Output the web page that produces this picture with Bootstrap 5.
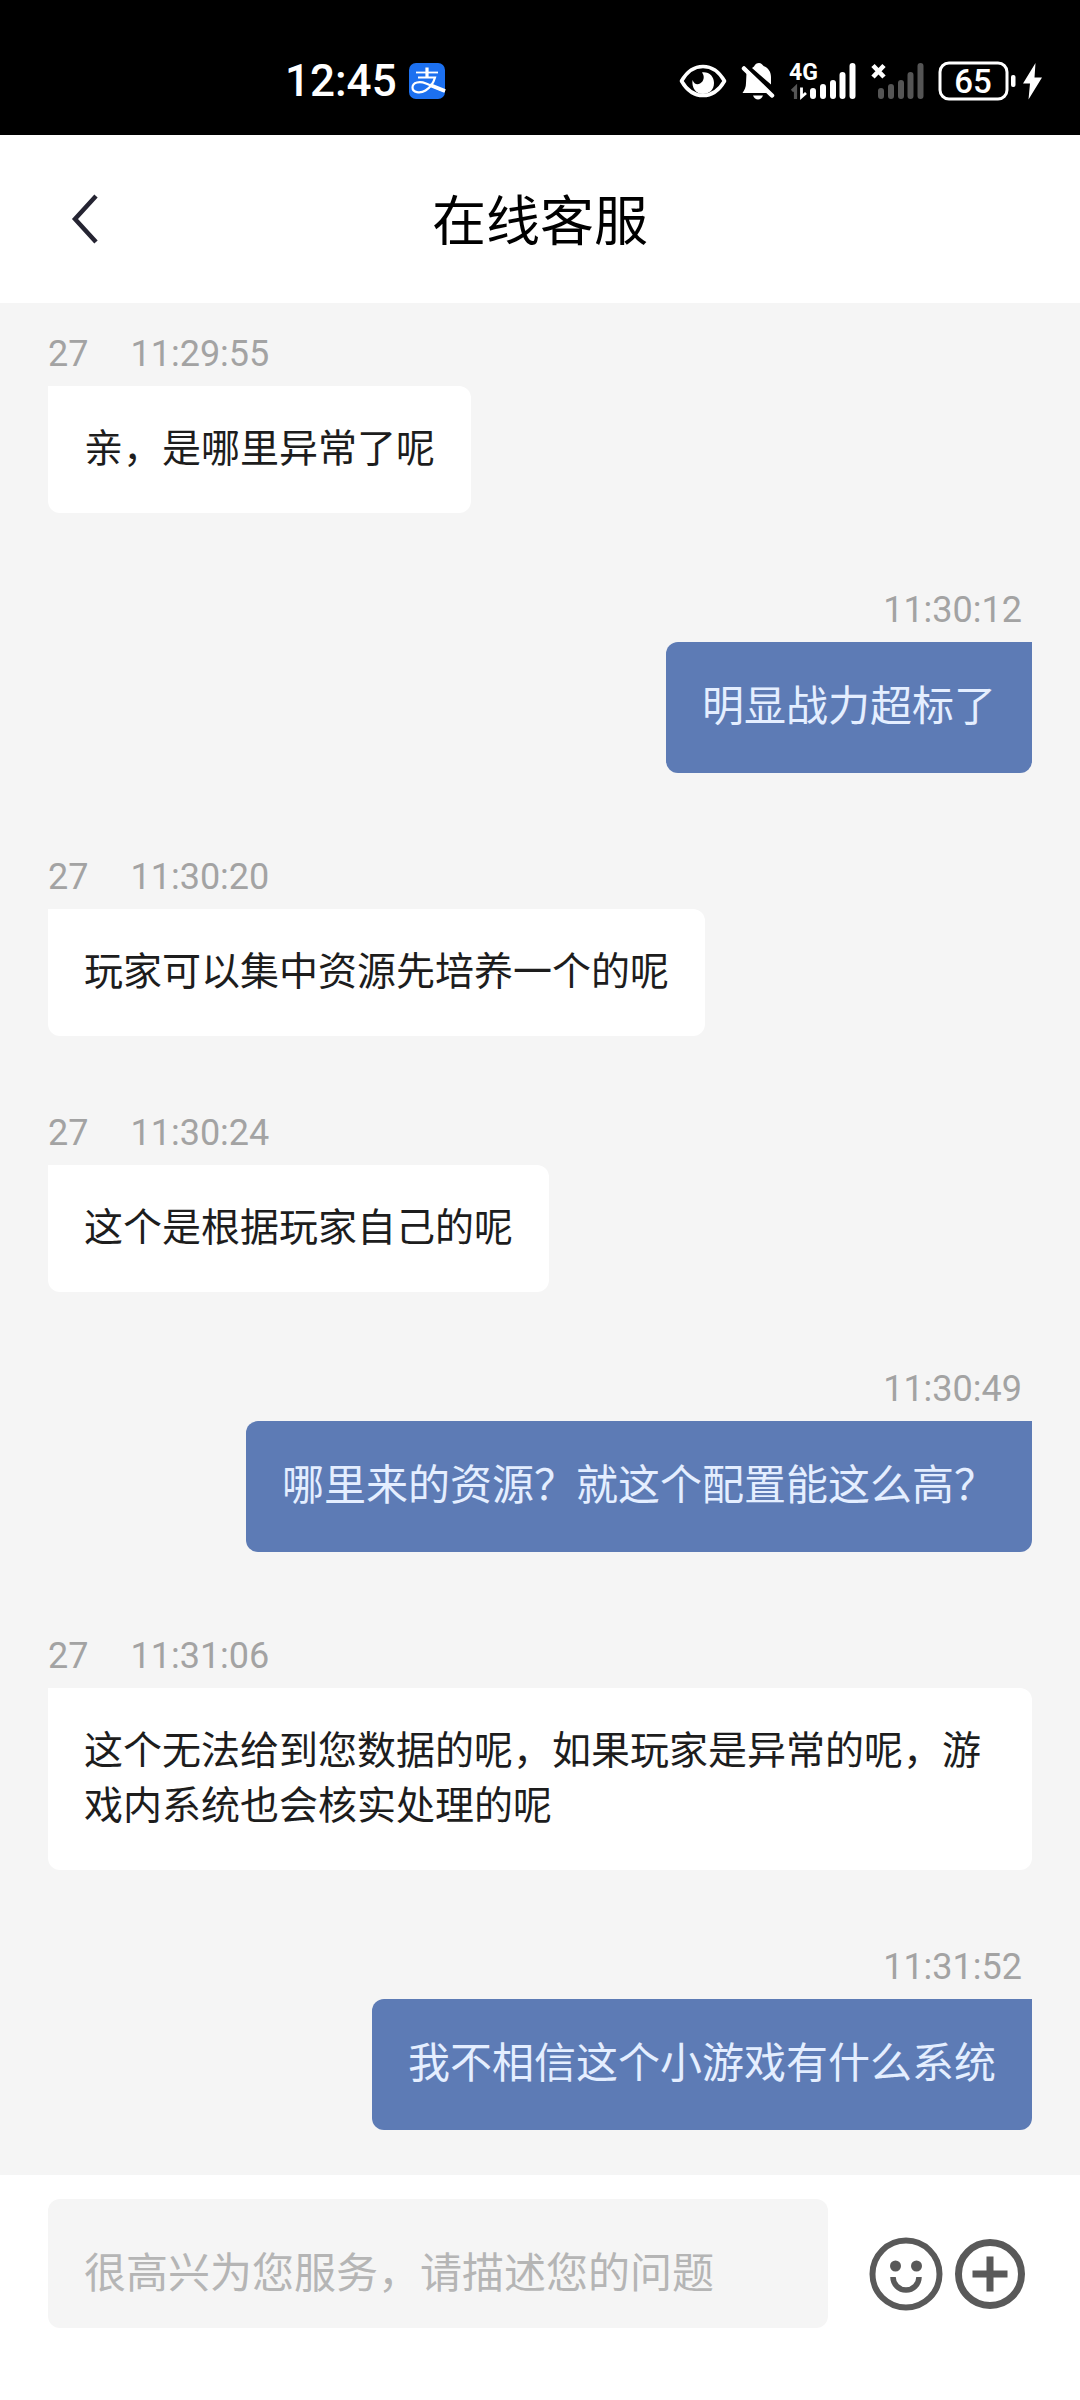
<!DOCTYPE html>
<html lang="zh-CN">
<head>
<meta charset="utf-8">
<meta name="viewport" content="width=device-width, initial-scale=1">
<title>在线客服</title>
<link rel="stylesheet" href="https://cdn.jsdelivr.net/npm/bootstrap@5.3.0/dist/css/bootstrap.min.css">
<style>
  body { font-family: Roboto, "Noto Sans CJK SC", sans-serif; background: #fff; }
  .status-bar { background: #000; color: #fff; height: 135px; padding: 26px 38px 0 285px; }
  .status-clock { font-size: 44px; line-height: 54px; font-weight: 500; }
  .status-left { gap: 12px; }
  .status-icons { gap: 14px; }
  .battery-group { gap: 7px; }
  .status-bar svg, .composer svg, .back-btn svg { display: block; overflow: visible; }
  .status-bar text { font-family: Roboto, sans-serif; fill: #fff; }

  .title-bar { height: 168px; padding: 8px 48px 0; display: grid; grid-template-columns: 72px 1fr 72px; align-items: center; }
  .title-bar h1 { font-size: 54px; line-height: 78px; font-weight: 400; color: #000; }
  .back-btn { padding: 0 0 8px 24px; line-height: 1; }

  .chat { background: #f5f5f5; padding: 30px 48px 42px; }
  .msg { margin-bottom: 76px; }
  .msg-me { margin-bottom: 83px; }
  .msg:last-child { margin-bottom: 0; }
  .msg-meta { font-size: 36px; line-height: 42px; color: #a3a3a3; margin-bottom: 11px; gap: 42px; }
  .msg-me .msg-meta { padding-right: 10px; }
  .bubble { background: #fff; color: #1d1d1d; font-size: 39px; line-height: 55px; padding: 36px 36px 36px; border-radius: 0 12px 12px 12px; }
  .msg-me .bubble { background: #5d7bb5; color: #e4eeff; font-size: 42px; line-height: 60px; padding: 35px 36px 36px; border-radius: 12px 0 12px 12px; }

  .composer { padding: 24px 55px 72px 48px; gap: 41px; }
  .composer .form-control { background: #f5f5f5; border: 0; border-radius: 12px; font-size: 42px; line-height: 64px; height: 129px; padding: 42px 36px 23px; color: #1d1d1d; }
  .composer .form-control::placeholder { color: #b5b5b5; opacity: 1; }
  .composer-actions { gap: 12px; padding-top: 20px; }
</style>
</head>
<body>
<div class="d-flex flex-column min-vh-100">

  <div class="status-bar d-flex align-items-center justify-content-between">
    <div class="status-left d-flex align-items-center">
      <span class="status-clock">12:45</span>
      <svg width="36" height="36" viewBox="0 0 36 36" role="img" aria-label="支付宝">
        <rect width="36" height="36" rx="7" fill="#1c70f0"/>
        <g fill="none" stroke="#fff">
          <path d="M7 9.500H29" stroke-width="1.800"/>
          <path d="M18 4.500V15" stroke-width="3.200"/>
          <path d="M9 14.500H26C24.500 20 20.500 25 16.500 27.500C11 31 3.500 29.500 3.500 24.500C3.500 19 11 18 17 20.500C23 23 29 26 36 28" stroke-width="2.200"/>
          <path d="M21 22L36 28" stroke-width="4"/>
        </g>
      </svg>
    </div>
    <div class="status-icons d-flex align-items-center">
      <svg width="48" height="40" viewBox="0 0 48 40" role="img" aria-label="护眼模式">
        <path d="M2.500 20C8 10.500 15 5.500 24 5.500S40 10.500 45.500 20C40 29.500 33 34.500 24 34.500S8 29.500 2.500 20Z" fill="none" stroke="#fff" stroke-width="3.600" stroke-linejoin="round"/>
        <path d="M23 11.500C30 10.500 35 15.500 35 22C35 29 30 33 24 33C17 33 12.500 27 13.500 19C15 23 18 24 21 22.500C25 20.500 26 15 23 11.500Z" fill="#fff"/>
      </svg>
      <svg width="34" height="40" viewBox="0 0 34 40" role="img" aria-label="静音">
        <path d="M13 5.500C14 3 16 2 18 2S21.500 3.500 22.500 5C27.500 7 30 11 30 16V23.500L11 7Z" fill="#fff"/>
        <path d="M5.500 12L26 32H1.500C3.500 29 5 26.500 5 22Z" fill="#fff"/>
        <path d="M3 7.500L31 34.500" stroke="#fff" stroke-width="4.500" stroke-linecap="round"/>
        <path d="M7.500 6.500L33 30.500" stroke="#000" stroke-width="2.500"/>
        <path d="M12 34.500H22C21 37 19 38.500 17 38.500S13 37 12 34.500Z" fill="#fff"/>
      </svg>
      <svg width="67" height="40" viewBox="0 0 67 40" role="img" aria-label="4G 信号">
        <text x="0" y="19" font-size="23" font-weight="700">4G</text>
        <path d="M3 30L6.500 26.500V38" fill="none" stroke="#555" stroke-width="3.200"/>
        <path d="M12.500 26.500V36L17 32" fill="none" stroke="#fff" stroke-width="2.800"/>
        <g stroke="#fff" stroke-width="6" stroke-linecap="round"><path d="M24 30V35M34 26V35M44 22V35M53.500 14V35M63.500 5V35"/></g>
      </svg>
      <svg width="54" height="40" viewBox="0 0 54 40" role="img" aria-label="无信号">
        <path d="M3 4.500L14 16M14 4.500L3 16" stroke="#fff" stroke-width="4.600"/>
        <g stroke="#555" stroke-width="6" stroke-linecap="round"><path d="M11 30V35M21 26V35M31 22V35M40.500 14V35M50.500 5V35"/></g>
      </svg>
      <div class="battery-group d-flex align-items-center">
        <svg width="78" height="40" viewBox="0 0 78 40" role="img" aria-label="电量 65%">
          <rect x="2" y="2" width="67" height="36" rx="9" fill="none" stroke="#fff" stroke-width="3"/>
          <rect x="73" y="14" width="4.500" height="12" rx="2" fill="#fff"/>
          <text x="35" y="32" font-size="33" font-weight="500" text-anchor="middle">65</text>
        </svg>
        <svg width="19" height="40" viewBox="0 0 19 40" role="img" aria-label="充电中">
          <path d="M12.500 2L0 22.500H7L5.500 38.500L19 16.500H11.500Z" fill="#fff"/>
        </svg>
      </div>
    </div>
  </div>

  <header class="title-bar bg-white">
    <button type="button" class="btn border-0 back-btn" aria-label="返回">
      <svg width="26" height="50" viewBox="0 0 26 50"><path d="M24 2L3 25L24 48" fill="none" stroke="#252432" stroke-width="4.500"/></svg>
    </button>
    <h1 class="m-0 text-center">在线客服</h1>
  </header>

  <main class="chat flex-grow-1">
    <div class="msg d-flex flex-column align-items-start">
      <div class="msg-meta d-flex"><span>27</span><time>11:29:55</time></div>
      <div class="bubble">亲，是哪里异常了呢</div>
    </div>
    <div class="msg msg-me d-flex flex-column align-items-end">
      <div class="msg-meta"><time>11:30:12</time></div>
      <div class="bubble">明显战力超标了</div>
    </div>
    <div class="msg d-flex flex-column align-items-start">
      <div class="msg-meta d-flex"><span>27</span><time>11:30:20</time></div>
      <div class="bubble">玩家可以集中资源先培养一个的呢</div>
    </div>
    <div class="msg d-flex flex-column align-items-start">
      <div class="msg-meta d-flex"><span>27</span><time>11:30:24</time></div>
      <div class="bubble">这个是根据玩家自己的呢</div>
    </div>
    <div class="msg msg-me d-flex flex-column align-items-end">
      <div class="msg-meta"><time>11:30:49</time></div>
      <div class="bubble">哪里来的资源？就这个配置能这么高？</div>
    </div>
    <div class="msg d-flex flex-column align-items-start">
      <div class="msg-meta d-flex"><span>27</span><time>11:31:06</time></div>
      <div class="bubble">这个无法给到您数据的呢，如果玩家是异常的呢，游戏内系统也会核实处理的呢</div>
    </div>
    <div class="msg msg-me d-flex flex-column align-items-end">
      <div class="msg-meta"><time>11:31:52</time></div>
      <div class="bubble">我不相信这个小游戏有什么系统</div>
    </div>
  </main>

  <form class="composer bg-white d-flex align-items-center">
    <input type="text" class="form-control" aria-label="问题" placeholder="很高兴为您服务，请描述您的问题">
    <div class="composer-actions d-flex align-items-center flex-shrink-0">
      <button type="button" class="btn p-0 border-0" aria-label="表情">
        <svg width="74" height="74" viewBox="0 0 74 74">
          <circle cx="37" cy="37" r="33.500" fill="none" stroke="#595959" stroke-width="6"/>
          <circle cx="26.500" cy="29" r="5.500" fill="#595959"/>
          <circle cx="47.500" cy="29" r="5.500" fill="#595959"/>
          <path d="M24 40a13 13 0 0 0 26 0" fill="none" stroke="#595959" stroke-width="5.500"/>
        </svg>
      </button>
      <button type="button" class="btn p-0 border-0" aria-label="更多">
        <svg width="70" height="70" viewBox="0 0 70 70">
          <circle cx="35" cy="35" r="31.500" fill="none" stroke="#595959" stroke-width="7"/>
          <path d="M35 17.500V52.500M17.500 35H52.500" stroke="#595959" stroke-width="7"/>
        </svg>
      </button>
    </div>
  </form>
</div>
<script src="https://cdn.jsdelivr.net/npm/bootstrap@5.3.0/dist/js/bootstrap.bundle.min.js"></script>
</body>
</html>
